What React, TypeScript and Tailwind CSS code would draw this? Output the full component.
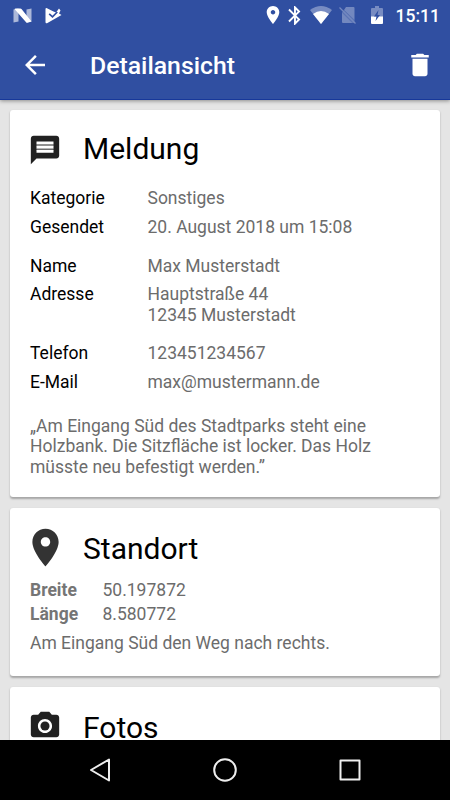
import type { ReactNode } from 'react';

const contactRows = [
  { label: 'Kategorie', value: ['Sonstiges'], gap: 'mt-0' },
  { label: 'Gesendet', value: ['20. August 2018 um 15:08'], gap: 'mt-[8.25px]' },
  { label: 'Name', value: ['Max Musterstadt'], gap: 'mt-[18.75px]' },
  { label: 'Adresse', value: ['Hauptstraße 44', '12345 Musterstadt'], gap: 'mt-[7.75px]' },
  { label: 'Telefon', value: ['123451234567'], gap: 'mt-[18.25px]' },
  { label: 'E-Mail', value: ['max@mustermann.de'], gap: 'mt-[8.25px]' },
];

const coordinates = [
  { label: 'Breite', value: '50.197872' },
  { label: 'Länge', value: '8.580772' },
];

function StatusBar() {
  return (
    <div className="flex h-[30px] items-center text-white">
      <svg className="ml-[13px] h-[15px] w-[19px]" viewBox="0 0 19 15" fill="currentColor">
        <path d="M.5 1.500 5.500.5v13l-5 1zM13.500 1.500l5-1v13l-5 1z" opacity=".6" />
        <path d="M2.500.5h4.800q.7 0 1.200.6l10 12.400-4 1.200q-.8.200-1.400-.5L1.500 1z" />
      </svg>
      <svg className="ml-[12.500px] h-[17px] w-[17px]" viewBox="0 0 17 17" fill="currentColor">
        <path d="M2 1.200 8.500 4.500 11 5.500 14 1.500 15.500 3.500 14 6.500 16.500 8 2 16.200Q.5 16.700.5 15V2.300Q.5.5 2 1.200z" />
        <path d="m4.200 6.800 3.300 3L12.300 5" fill="none" stroke="#304fa1" strokeWidth="1.700" />
      </svg>

      <div className="ml-auto flex h-full items-center">
        <svg className="h-[18px] w-[14px]" viewBox="5 2 14 20" fill="currentColor">
          <path d="M12 2C8.130 2 5 5.130 5 9c0 5.250 7 13 7 13s7-7.750 7-13c0-3.870-3.130-7-7-7zm0 9.500c-1.380 0-2.500-1.120-2.500-2.500s1.120-2.500 2.500-2.500 2.500 1.120 2.500 2.500-1.120 2.500-2.500 2.500z" />
        </svg>
        <svg className="ml-[8px] h-[19px] w-[13px]" viewBox="5 2 13 20" fill="currentColor">
          <path d="M17.710 7.710 12 2h-1v7.590L6.410 5 5 6.410 10.590 12 5 17.590 6.410 19 11 14.410V22h1l5.710-5.710-4.300-4.290 4.300-4.290zM13 5.830l1.880 1.880L13 9.590V5.830zm1.880 10.460L13 18.170v-3.760l1.880 1.880z" />
        </svg>
        <svg className="ml-[9px] h-[18px] w-[22px]" viewBox="0 0 22 18" fill="currentColor">
          <path d="M11 18 0 4Q11-4 22 4z" opacity=".35" />
          <path d="M11 18 3 8Q11 2 19 8z" />
        </svg>
        <svg className="ml-[7px] h-[18px] w-[18px]" viewBox="0 0 18 18" fill="currentColor" opacity=".32">
          <path d="M7 1h7.500q1 0 1 1v12L5 4zM3 6.500 13.500 17H4q-1 0-1-1z" />
          <path d="M5 4 15.500 14v3h-2L3 6.500z" opacity=".7" />
          <path d="m.5 1.500 16 16" fill="none" stroke="currentColor" strokeWidth="1.300" />
        </svg>
        <svg className="ml-[14px] h-[18px] w-[12px]" viewBox="0 0 12 18" fill="currentColor">
          <path d="M1 2h3V0h4v2h3q1 0 1 1v8H0V3q0-1 1-1z" opacity=".35" />
          <path d="M0 10.500h12V17q0 1-1 1H1q-1 0-1-1z" />
          <path d="M7.500 4 3 10.500h2.500L4.500 15 9 9H6.500z" fill="#304fa1" />
        </svg>
        <span className="mr-[10px] ml-[13px] pt-px text-[17.500px] leading-5 font-medium">15:11</span>
      </div>
    </div>
  );
}

function TopBar() {
  return (
    <header className="relative z-10 h-[100px] shrink-0 border-b border-[#17389a] bg-[#304fa1] shadow-[0_1px_4px_rgba(0,0,0,0.4)]">
      <StatusBar />
      <div className="flex h-[70px] items-center text-white">
        <svg className="ml-5 size-[30px]" viewBox="0 0 24 24" fill="currentColor">
          <path d="M20 11H7.830l5.590-5.590L12 4l-8 8 8 8 1.410-1.410L7.830 13H20v-2z" />
        </svg>
        <h1 className="ml-10 pt-[2px] text-[24.800px] leading-[30px] font-medium">Detailansicht</h1>
        <svg className="mr-[15px] mb-px ml-auto size-[30px]" viewBox="0 0 24 24" fill="currentColor">
          <path d="M6 19c0 1.100.9 2 2 2h8c1.100 0 2-.9 2-2V7H6v12zM19 4h-3.500l-1-1h-5l-1 1H5v2h14V4z" />
        </svg>
      </div>
    </header>
  );
}

function Card({ className, children }: { className: string; children: ReactNode }) {
  return (
    <section className={`shrink-0 rounded-[3px] bg-white px-5 shadow-[0_1.500px_2px_rgba(0,0,0,0.28)] ${className}`}>
      {children}
    </section>
  );
}

function CardTitle({ icon, title }: { icon: ReactNode; title: string }) {
  return (
    <div className="flex h-[35px] items-center">
      <div className="flex w-[53px] items-center">{icon}</div>
      <h2 className="text-[30px] leading-[35px] text-black">{title}</h2>
    </div>
  );
}

function NavBar() {
  return (
    <nav className="flex h-[60px] shrink-0 items-center justify-between bg-black px-[85px]">
      <svg className="size-[30px]" viewBox="0 0 30 30" fill="none" stroke="#eee" strokeWidth="2" strokeLinejoin="round">
        <path d="M24 4.500v21L6 15z" />
      </svg>
      <svg className="size-[30px]" viewBox="0 0 30 30" fill="none" stroke="#eee" strokeWidth="2">
        <circle cx="15" cy="15" r="10.800" />
      </svg>
      <svg className="size-[30px]" viewBox="0 0 30 30" fill="none" stroke="#eee" strokeWidth="2" strokeLinejoin="round">
        <path d="M5.500 5.500h19v19h-19z" />
      </svg>
    </nav>
  );
}

export default function App() {
  return (
    <div className="flex h-[800px] w-[450px] flex-col overflow-hidden bg-[#e5e5e5] font-['Roboto',sans-serif] text-[17.500px] leading-[20.500px] text-[#6c6c6c]">
      <TopBar />
      <main className="flex min-h-0 flex-1 flex-col gap-[11px] overflow-hidden px-2.5 pt-2.5">
        <Card className="h-[387px] pt-[21px]">
          <CardTitle
            title="Meldung"
            icon={
              <svg className="mt-[2px] -ml-[2px] size-[34px]" viewBox="0 0 24 24" fill="#212121">
                <path d="M20 2H4c-1.100 0-1.990.9-1.990 2L2 22l4-4h14c1.100 0 2-.9 2-2V4c0-1.100-.9-2-2-2zm-2 12H6v-2h12v2zm0-3H6V9h12v2zm0-3H6V6h12v2z" />
                <path d="M6 7.500h12v2H6zM6 10.500h12v2H6z" fill="#fff" opacity=".35" />
              </svg>
            }
          />
          <dl className="mt-[21.750px]">
            {contactRows.map((row) => (
              <div key={row.label} className={`flex ${row.gap}`}>
                <dt className="w-[117.500px] text-black">{row.label}</dt>
                <dd>
                  {row.value.map((line) => (
                    <div key={line}>{line}</div>
                  ))}
                </dd>
              </div>
            ))}
          </dl>
          <p className="mt-[23.250px]">
            „Am Eingang Süd des Stadtparks steht eine
            <br />
            Holzbank. Die Sitzfläche ist locker. Das Holz
            <br />
            müsste neu befestigt werden.”
          </p>
        </Card>

        <Card className="h-[168px] pt-[23px]">
          <CardTitle
            title="Standort"
            icon={
              <svg className="mb-[2px] -ml-[7px] size-[45px]" viewBox="0 0 24 24" fill="#333">
                <path d="M12 2C8.130 2 5 5.130 5 9c0 5.250 7 13 7 13s7-7.750 7-13c0-3.870-3.130-7-7-7zm0 9.500c-1.380 0-2.500-1.120-2.500-2.500s1.120-2.500 2.500-2.500 2.500 1.120 2.500 2.500-1.120 2.500-2.500 2.500z" />
              </svg>
            }
          />
          <dl className="mt-[13.750px] flex flex-col gap-[3.500px]">
            {coordinates.map((row) => (
              <div key={row.label} className="flex">
                <dt className="w-[72.500px] font-bold text-[#757575]">{row.label}</dt>
                <dd>{row.value}</dd>
              </div>
            ))}
          </dl>
          <p className="mt-[8.250px]">Am Eingang Süd den Weg nach rechts.</p>
        </Card>

        <Card className="h-[160px] pt-[23px]">
          <CardTitle
            title="Fotos"
            icon={
              <svg className="mb-[3px] -ml-[2px] size-[34px]" viewBox="0 0 24 24" fill="#212121">
                <circle cx="12" cy="12" r="3.200" />
                <path d="M9 2 7.170 4H4c-1.100 0-2 .9-2 2v12c0 1.100.9 2 2 2h16c1.100 0 2-.9 2-2V6c0-1.100-.9-2-2-2h-3.170L15 2H9zm3 15c-2.760 0-5-2.240-5-5s2.240-5 5-5 5 2.240 5 5-2.240 5-5 5z" />
              </svg>
            }
          />
        </Card>
      </main>
      <NavBar />
    </div>
  );
}
